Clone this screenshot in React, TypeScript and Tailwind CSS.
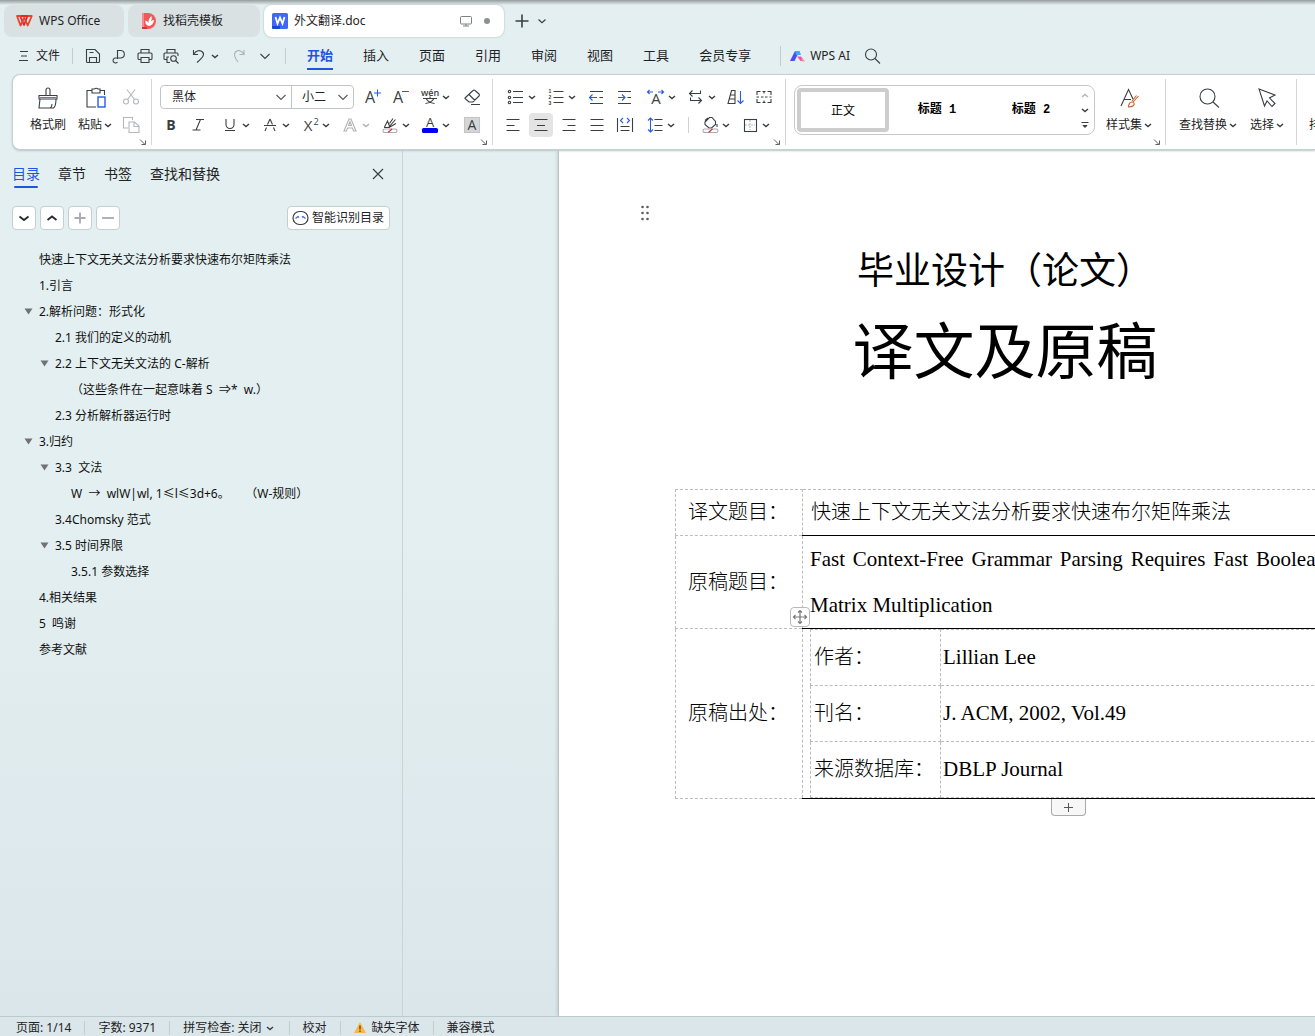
import React from "react";
import type { ReactNode } from "react";

const INK = "#3b3f42";
const BLUE = "#2a5ce0";

function Icon({ children, size = 20 }: { children: ReactNode; size?: number }) {
  return (
    <svg
      width={size}
      height={size}
      viewBox={`0 0 ${size} ${size}`}
      fill="none"
      stroke={INK}
      strokeWidth="1.1"
      aria-hidden="true"
      className="shrink-0"
    >
      {children}
    </svg>
  );
}

function Chevron({ color = "#3b3f42" }: { color?: string }) {
  return (
    <svg width="12" height="12" viewBox="0 0 12 12" fill="none" className="shrink-0">
      <path d="M3 5 6 7.500 9 5" stroke={color} strokeWidth="1.500" />
    </svg>
  );
}

function WideChevron({ color = "#55595c" }: { color?: string }) {
  return (
    <svg width="12" height="12" viewBox="0 0 12 12" fill="none" className="shrink-0">
      <path d="M1.500 4 6 8.500 10.500 4" stroke={color} strokeWidth="1.100" />
    </svg>
  );
}

function Tool({
  label,
  children,
  drop,
  dim,
  className = "",
}: {
  label: string;
  children: ReactNode;
  drop?: boolean;
  dim?: boolean;
  className?: string;
}) {
  return (
    <button type="button" aria-label={label} className={`flex h-6 shrink-0 items-center ${className}`}>
      <Icon>{children}</Icon>
      {drop && <Chevron color={dim ? "#b0b3b5" : INK} />}
    </button>
  );
}

function Glyph({
  x,
  y,
  size,
  color = INK,
  weight = 400,
  family = "'Open Sans','Noto Sans',sans-serif",
  children,
}: {
  x: number;
  y: number;
  size: number;
  color?: string;
  weight?: number;
  family?: string;
  children: string;
}) {
  return (
    <text x={x} y={y} fontSize={size} fill={color} stroke="none" fontWeight={weight} textAnchor="middle" fontFamily={family}>
      {children}
    </text>
  );
}

function Launcher() {
  return (
    <svg
      width="8"
      height="8"
      viewBox="0 0 8 8"
      fill="none"
      stroke="#5d6164"
      className="absolute right-1 bottom-[3px]"
      aria-hidden="true"
    >
      <path d="M1 1.500 6 6.500M6.500 2.500V6.500H2.500" />
    </svg>
  );
}

function VLine({ className }: { className: string }) {
  return <div className={`w-px shrink-0 bg-[#c3cdcf] ${className}`} />;
}

/* ---------- title bar ---------- */

function TitleTabs() {
  return (
    <div className="flex h-8 shrink-0 items-stretch gap-1 pl-1">
      <button type="button" className="flex w-[120px] items-center gap-1.5 rounded-lg bg-[#d9e1e3] pl-3 text-xs">
        <svg width="17" height="14" viewBox="0 0 17 14" fill="none" strokeWidth="1.800" strokeLinejoin="round">
          <path d="M5 2h6.500L8 11 4.500 3" stroke="#e5252a" />
          <path d="M5 2H1L4.500 11.500 8.300 3.500 11.700 11.500 15.800 2H12" stroke="#f0402c" />
        </svg>
        <span>WPS Office</span>
      </button>
      <button type="button" className="flex w-[132px] items-center gap-[7px] rounded-lg bg-[#d9e1e3] pl-3.5 text-xs">
        <svg width="14" height="16" viewBox="0 0 14 16">
          <path d="M0 0h6a8 8 0 0 1 0 16H0z" fill="#f05a5a" />
          <path d="M0 0h2v16H0z" fill="#f88" />
          <path d="M0 14h5v2H0z" fill="#c93a3a" />
          <path d="M7 13C3.500 12 3 9.500 3.500 7.500 5 8 6 9 6.500 10 6.300 7 7.500 4.500 9.500 3c.5 2 .3 3.500-.5 5 1-.8 2-1 3-1-.2 3-2 5.500-5 6z" fill="#fff" />
        </svg>
        <span>找稻壳模板</span>
      </button>
      <button
        type="button"
        className="flex w-[240px] items-center rounded-lg bg-white pr-3.5 pl-2 text-xs shadow-[0_0_2px_#9fb4b6]"
      >
        <svg width="16" height="16" viewBox="0 0 16 16" className="mr-1.5">
          <rect width="16" height="16" rx="1.500" fill="#4068f5" />
          <path d="M0 13h8v3H1.500A1.500 1.500 0 0 1 0 14.500z" fill="#1a48c8" />
          <path d="M3.500 4 5.500 10.500 8 4.500 10.500 10.500 12.500 4" stroke="#fff" strokeWidth="1.800" fill="none" />
        </svg>
        <span>外文翻译.doc</span>
        <svg width="12" height="12" viewBox="0 0 12 12" fill="none" stroke="#7b8083" className="ml-auto">
          <rect x=".5" y="1.500" width="11" height="7.500" rx="1" />
          <path d="M6 9v2M3 11h6" />
        </svg>
        <span className="ml-3 size-[6px] rounded-full bg-[#8b8f91]" />
      </button>
      <button type="button" aria-label="新建" className="ml-1 flex items-center">
        <Icon>
          <path d="M10 3.500v13M3.500 10h13" strokeWidth="1.600" />
        </Icon>
      </button>
      <button type="button" aria-label="标签列表" className="flex items-center">
        <svg width="12" height="12" viewBox="0 0 12 12" fill="none">
          <path d="M2.500 4.500 6 7.800 9.500 4.500" stroke={INK} strokeWidth="1.200" />
        </svg>
      </button>
    </div>
  );
}

/* ---------- menu bar ---------- */

const MENUS = ["开始", "插入", "页面", "引用", "审阅", "视图", "工具", "会员专享"];

function MenuBar() {
  return (
    <div className="flex h-[37px] shrink-0 items-center pl-[18px] whitespace-nowrap">
      <button type="button" className="flex items-center gap-1.5 text-xs">
        <svg width="12" height="12" viewBox="0 0 12 12" stroke={INK} strokeWidth="1.100">
          <path d="M2 1.500h8M3 6h6M1 10.500h9" />
        </svg>
        文件
      </button>
      <VLine className="ml-3 h-4" />
      <div className="ml-2.5 flex items-center gap-1.5">
        <Tool label="保存">
          <path d="M3.500 3.500h8.500l4.500 4.500v7.500a1 1 0 0 1-1 1h-11a1 1 0 0 1-1-1z" />
          <path d="M6.500 16.500v-5h7v5M6.500 6.500h4" />
        </Tool>
        <Tool label="分享">
          <path d="M8.500 13V4.500h3.500a4 3.800 0 0 1 0 7.500H6.500a2.500 2.500 0 1 0 2 4" />
        </Tool>
        <Tool label="打印">
          <path d="M6 7V3.500h8V7M6 13.500H4a1 1 0 0 1-1-1V8a1 1 0 0 1 1-1h12a1 1 0 0 1 1 1v4.500a1 1 0 0 1-1 1h-2M6 11.500h8v5H6z" />
        </Tool>
        <Tool label="打印预览">
          <path d="M6 7V3.500h8V7M5.500 13.500H4a1 1 0 0 1-1-1V8a1 1 0 0 1 1-1h12a1 1 0 0 1 1 1v2M8 11H6v5.500h3" />
          <circle cx="12.500" cy="12.500" r="2.800" />
          <path d="m14.500 14.500 3 3" />
        </Tool>
        <Tool label="撤销" drop className="ml-0.5">
          <path d="M4.500 4v4.500H9M4.500 8.500C7 4.500 11 3.500 13.500 6S14 11.500 8 16.500" />
        </Tool>
        <Tool label="恢复" className="ml-0.5">
          <path d="M15 4v4.500h-4.500M15 8.500C13 4.500 9 3.500 6.500 6S6 12 9 16" stroke="#a9b2b4" />
        </Tool>
      </div>
      <button type="button" aria-label="更多" className="ml-2.5">
        <WideChevron color={INK} />
      </button>
      <VLine className="ml-3.5 h-4" />
      <nav className="ml-[21px] flex gap-[30px] text-[13px]">
        {MENUS.map((m, i) => (
          <a
            key={m}
            href="#"
            className={
              i === 0
                ? "flex h-7 items-center border-b-2 border-[#1f55e0] pt-0.5 font-bold text-[#1f55e0]"
                : "flex h-7 items-center border-b-2 border-transparent pt-0.5"
            }
          >
            {m}
          </a>
        ))}
      </nav>
      <VLine className="ml-[29px] h-5" />
      <button type="button" className="ml-[9px] flex items-center gap-1 text-xs">
        <svg width="16" height="14" viewBox="0 0 16 14">
          <path d="M0 12 5 2h4.500L4.500 12z" fill="#4a4cf0" />
          <path d="M5 2h4.500l1.500 4H6z" fill="#42a5f8" />
          <path d="M7 7.500h4L14.500 12h-4z" fill="#ee4fc0" />
          <path d="M11.500 9 15 12.500h-3z" fill="#ffa08a" />
        </svg>
        WPS AI
      </button>
      <button type="button" aria-label="搜索" className="ml-3">
        <Icon>
          <circle cx="9" cy="8.500" r="5.500" />
          <path d="m13 12.500 5 5" />
        </Icon>
      </button>
    </div>
  );
}

/* ---------- ribbon ---------- */

function ClipboardGroup() {
  return (
    <section className="relative flex w-[138px] shrink-0 pt-3 pl-4 text-xs">
      <button type="button" className="flex w-[38px] flex-col items-center gap-2">
        <Icon size={22}>
          <path d="M2 8.500h18v3.500H2zM3 12l-1 9h14.500c1.500-1 2.500-5 2.500-9M13.500 21c1-1 1.500-2.500 1.500-4M9 8.500V3a2 2 0 0 1 4 0v5.500" />
          <path d="M2.500 10.500h17" stroke="#d0602c" />
        </Icon>
        格式刷
      </button>
      <button type="button" className="ml-[11px] flex w-9 flex-col items-center gap-2">
        <Icon size={22}>
          <path d="M7 3.500H2v16.500h9M15 3.500h4.500V8M7 2h2.500a2 1.500 0 0 1 3.500 0h2v4H7z" />
          <rect x="13" y="10" width="7" height="10" stroke={BLUE} strokeWidth="1.400" />
        </Icon>
        <span className="flex items-center">
          粘贴
          <Chevron />
        </span>
      </button>
      <div className="-mt-0.5 ml-[7px] flex flex-col gap-1">
        <Tool label="剪切">
          <g stroke="#b4b7b9">
            <circle cx="5" cy="14.500" r="2.500" />
            <circle cx="15" cy="14.500" r="2.500" />
            <path d="m6.500 12.500 7.500-10M13.500 12.500 6 2.500" />
          </g>
        </Tool>
        <Tool label="复制">
          <g stroke="#b4b7b9">
            <path d="M7 13H2.500V2.500h9V5" />
            <path d="M8 7h5.500L18 11v6.500H8zM13 7v4.500h5" />
          </g>
        </Tool>
      </div>
      <Launcher />
    </section>
  );
}

function Rule() {
  return <div className="my-1 w-px shrink-0 bg-[#d4d7d8]" />;
}

function FontGroup() {
  return (
    <section className="relative flex w-[340px] shrink-0 flex-col gap-1 pt-2.5 pl-2">
      <div className="flex h-6 items-center gap-2">
        <div className="flex h-6 w-[194px] items-center rounded border border-[#c2c5c7] text-xs">
          <label className="relative flex h-full w-[131px] items-center border-r border-[#c2c5c7]">
            <select aria-label="字体" className="h-full w-full appearance-none bg-transparent pl-[11px] outline-none">
              <option>黑体</option>
            </select>
            <span className="pointer-events-none absolute right-1">
              <WideChevron />
            </span>
          </label>
          <label className="relative flex h-full flex-1 items-center">
            <select aria-label="字号" className="h-full w-full appearance-none bg-transparent pl-2.5 outline-none">
              <option>小二</option>
            </select>
            <span className="pointer-events-none absolute right-1">
              <WideChevron />
            </span>
          </label>
        </div>
        <Tool label="增大字号">
          <Glyph x={8} y={16} size={16}>A</Glyph>
          <path d="M15.500 2.500v7M12 6h7" stroke={BLUE} />
        </Tool>
        <Tool label="减小字号">
          <Glyph x={8} y={16} size={16}>A</Glyph>
          <path d="M12 4.500h7" stroke={BLUE} />
        </Tool>
        <Tool label="拼音指南" drop className="ml-0.5">
          <Glyph x={10} y={9} size={9} weight={600}>wén</Glyph>
          <path d="M3 11.500h14M10 9.500v2M6 11.500c1.500 2.500 5 4.500 8.500 5M14 11.500c-1.500 2.500-5 4.500-8.500 5" />
        </Tool>
        <Tool label="清除格式" className="ml-0.5">
          <path d="m3 11 8-7.500q1-1 2 0L17 7q1 1 0 2l-6 6H7l-4-3.500zM7 7.500l6 6M9 17.500h9" />
        </Tool>
      </div>
      <div className="flex h-6 items-center gap-2">
        <Tool label="加粗">
          <Glyph x={11} y={15} size={14} weight={700}>B</Glyph>
        </Tool>
        <Tool label="倾斜">
          <path d="M8 4.500h8M4.500 15h8M12.500 4.500l-4.500 10.500" />
        </Tool>
        <Tool label="下划线" drop className="ml-1">
          <path d="M6 4v5.500a4 4 0 0 0 8 0V4M5 15.500h10" />
        </Tool>
        <Tool label="删除线" drop>
          <path d="M10 4 7.500 9.500M10 4l2.500 5.500M4 10.500h12M6.500 12.500 5 16M13.500 12.500 15 16" />
        </Tool>
        <Tool label="上标" drop>
          <Glyph x={8} y={16} size={15}>X</Glyph>
          <Glyph x={16} y={10} size={9}>2</Glyph>
        </Tool>
        <Tool label="文字效果" drop dim>
          <path d="M4 16 9 4h2l5 12h-2.500l-1-3h-5l-1 3zM8.500 10.500h3L10 6.500z" stroke="#b0b3b5" />
        </Tool>
        <Tool label="突出显示" drop>
          <path d="M4 12.500h4.500l7-8M4.500 12l3-6 2 5M9 12.500l7-4M13 3.500l-3.500 5" />
          <rect x="3" y="14" width="14" height="3.500" rx="1.700" stroke="#a9acae" />
          <path d="m8 17.500 4-3.500" stroke="#e0303a" />
        </Tool>
        <Tool label="字体颜色" drop>
          <Glyph x={10} y={12} size={13}>A</Glyph>
          <rect x="2" y="13" width="16" height="5" rx="1.500" fill="#0000f5" stroke="none" />
        </Tool>
        <Tool label="字符底纹" className="ml-0.5">
          <rect x="2.500" y="2.500" width="15" height="15" fill="#d4d6d7" stroke="#c3c6c8" />
          <Glyph x={10} y={15} size={14}>A</Glyph>
        </Tool>
      </div>
      <Launcher />
    </section>
  );
}

const DIGIT_FONT = "'Liberation Sans',sans-serif";

function ParagraphGroup() {
  return (
    <section className="relative flex w-[292px] shrink-0 flex-col gap-1 pt-2.5 pl-2.5">
      <div className="flex h-6 items-center gap-2 pl-[3px]">
        <Tool label="项目符号" drop>
          <path d="M7 4.500h10M7 10.500h10M7 15.500h10" />
          <circle cx="3.500" cy="4.500" r="1.200" />
          <circle cx="3.500" cy="10.500" r="1.200" />
          <circle cx="3.500" cy="15.500" r="1.200" />
        </Tool>
        <Tool label="编号" drop>
          <path d="M7.500 4.500h10M7.500 10.500h10M7.500 15.500h10" />
          <Glyph x={4} y={6} size={5} weight={700} family={DIGIT_FONT}>1</Glyph>
          <Glyph x={4} y={12} size={5} weight={700} family={DIGIT_FONT}>2</Glyph>
          <Glyph x={4} y={18} size={5} weight={700} family={DIGIT_FONT}>3</Glyph>
        </Tool>
        <Tool label="减少缩进">
          <path d="M4 4.500h13M4 16.500h13M13.500 10.500h3.500" />
          <path d="M3.500 10.500H11M6.500 7.500l-3 3 3 3" stroke={BLUE} />
        </Tool>
        <Tool label="增加缩进">
          <path d="M4 4.500h13M4 16.500h13M13.500 10.500h3.500" />
          <path d="M4 10.500h7M8 7.500l3 3-3 3" stroke={BLUE} />
        </Tool>
        <Tool label="字符缩放" drop className="ml-1">
          <Glyph x={10} y={17} size={15}>A</Glyph>
          <path d="M1.500 5H7M3.500 3l-2 2 2 2M12 5h5.500M15.500 3l2 2-2 2" stroke={BLUE} />
        </Tool>
        <Tool label="换行" drop>
          <path d="M14.500 3.500v3h-11M6.500 3.500l-3 3 3 3M4.500 10.500v3h10.500M12.500 10.500l3 3-3 3" />
        </Tool>
        <Tool label="排序">
          <path d="M5.500 3.500H9v13H2zM4.500 8H9M3.500 12H9" />
          <path d="M14.500 4v12.500M11.500 13.500l3 3 3-3" stroke={BLUE} />
        </Tool>
        <Tool label="段落布局">
          <path d="M3 8V4.500h3.500M8.500 4.500h3M13.500 4.500H17V8M3 12v3.500h3.500M8.500 15.500h3M13.500 15.500H17V12M2.500 10H5M7 10h2.500M11 10h2.500M15.500 10h2M10 4.500v2M10 13.500v2" />
        </Tool>
      </div>
      <div className="flex h-6 items-center gap-2">
        <Tool label="左对齐">
          <path d="M3.500 4.500h13M3.500 10.500h8M3.500 15.500h13" />
        </Tool>
        <button
          type="button"
          aria-label="居中对齐"
          aria-pressed="true"
          className="-mx-0.5 flex size-6 shrink-0 items-center justify-center rounded bg-[#e4e4e4]"
        >
          <Icon>
            <path d="M3.500 4.500h13M6 10.500h8M3.500 15.500h13" />
          </Icon>
        </button>
        <Tool label="右对齐">
          <path d="M3.500 4.500h13M8.500 10.500h8M3.500 15.500h13" />
        </Tool>
        <Tool label="两端对齐">
          <path d="M3.500 4.500h13M3.500 10.500h13M3.500 15.500h13" />
        </Tool>
        <Tool label="分散对齐">
          <path d="M2.500 3v14M17.500 3v14M5.500 11.500h9M5.500 15.500h9" />
          <path d="m8 3-2.500 2.500L8 8M12 3l2.500 2.500L12 8" stroke={BLUE} />
        </Tool>
        <Tool label="行距" drop className="ml-0.5">
          <path d="M9.500 4.500h8M9.500 10.500h8M9.500 15.500h8" />
          <path d="M5.500 3v14M3 5.500 5.500 3 8 5.500M3 14.500 5.500 17 8 14.500" stroke={BLUE} />
        </Tool>
        <div className="mx-[3px] h-4 w-px bg-[#d0d3d4]" />
        <Tool label="底纹颜色" drop>
          <path d="m5 7 4.500-4.500h2.500l3.500 4v3L11.500 13H9L5 9.500zM5 5.500 8 3M17 9v3" />
          <rect x="3" y="14" width="15" height="3.500" rx="1.700" stroke="#a9acae" />
          <path d="m8.500 17.500 4-3.500" stroke="#e0303a" />
        </Tool>
        <Tool label="边框" drop>
          <path d="M10 5v10M5 10h10" stroke="#b4b7b9" strokeDasharray="2 1" />
          <rect x="4.500" y="4.500" width="12" height="12" />
        </Tool>
      </div>
      <Launcher />
    </section>
  );
}

function StylesGroup() {
  return (
    <section className="relative flex w-[379px] shrink-0 pt-2.5 pl-2">
      <div className="flex h-[50px] w-[301px] rounded-lg border border-[#c6c9ca] p-0.5 text-black">
        <button
          type="button"
          className="w-[92px] rounded border-4 border-[#cdcdcd] font-['Noto_Sans_CJK_SC',sans-serif] text-xs"
        >
          正文
        </button>
        <button
          type="button"
          className="w-[96px] font-['Liberation_Mono','Noto_Sans_CJK_SC',sans-serif] text-xs font-bold"
        >
          标题 1
        </button>
        <button
          type="button"
          className="w-[92px] font-['Liberation_Mono','Noto_Sans_CJK_SC',sans-serif] text-xs font-bold"
        >
          标题 2
        </button>
        <div className="-mr-px flex flex-1 flex-col items-center justify-between py-0.5">
          <button type="button" aria-label="上一行" className="rotate-180">
            <Chevron color="#b4b7b9" />
          </button>
          <button type="button" aria-label="下一行">
            <Chevron />
          </button>
          <button type="button" aria-label="更多样式">
            <svg width="12" height="12" viewBox="0 0 12 12" fill="none" stroke={INK}>
              <path d="M2.500 4.500h7M4 7.500h4L6 9.500z" fill={INK} />
            </svg>
          </button>
        </div>
      </div>
      <button type="button" className="ml-2 flex w-[54px] flex-col items-center gap-2 pt-0.5 text-xs">
        <Icon size={22}>
          <path d="M2 19 9.500 2.500 14 12M5.500 12.500H12" />
          <g stroke="#d0602c">
            <path d="M19.500 9 14 15M17.500 8.500 13 14M9.500 20c0-3 1.500-5 3.500-5s3 2 1.500 3.500-3 1.500-5 1.500z" />
          </g>
        </Icon>
        <span className="flex items-center whitespace-nowrap">
          样式集
          <Chevron />
        </span>
      </button>
      <Launcher />
    </section>
  );
}

function EditGroup() {
  return (
    <section className="flex w-[130px] shrink-0 gap-[9px] pt-3 pl-3 text-xs">
      <button type="button" className="flex w-[62px] flex-col items-center gap-2 whitespace-nowrap">
        <Icon size={22}>
          <circle cx="9.500" cy="9.500" r="7.500" />
          <path d="m15 15 6 5.500" />
        </Icon>
        <span className="flex items-center">
          查找替换
          <Chevron />
        </span>
      </button>
      <button type="button" className="flex w-[38px] flex-col items-center gap-2 whitespace-nowrap">
        <Icon size={22}>
          <path d="m2 2 16 6-5.500 3 5.500 5.500-3 3-5-5.500-2.500 5z" />
        </Icon>
        <span className="flex items-center">
          选择
          <Chevron />
        </span>
      </button>
    </section>
  );
}

function Ribbon() {
  return (
    <div className="relative z-10 ml-3 flex h-[76px] shrink-0 overflow-hidden rounded-l-lg border border-r-0 border-[#c4d1d2] bg-white shadow-[0_1px_2px_#b9c6c8]">
      <ClipboardGroup />
      <Rule />
      <FontGroup />
      <Rule />
      <ParagraphGroup />
      <Rule />
      <StylesGroup />
      <Rule />
      <EditGroup />
      <Rule />
      <button type="button" className="ml-3 flex shrink-0 flex-col pt-[42px] text-xs">
        排列
      </button>
    </div>
  );
}

/* ---------- outline pane ---------- */

type Entry = { text: string; level: 0 | 1 | 2; open?: boolean };

const OUTLINE: Entry[] = [
  { text: "快速上下文无关文法分析要求快速布尔矩阵乘法", level: 0 },
  { text: "1.引言", level: 0 },
  { text: "2.解析问题：形式化", level: 0, open: true },
  { text: "2.1 我们的定义的动机", level: 1 },
  { text: "2.2 上下文无关文法的 C-解析", level: 1, open: true },
  { text: "（这些条件在一起意味着 S  ⇒*  w.）", level: 2 },
  { text: "2.3 分析解析器运行时", level: 1 },
  { text: "3.归约", level: 0, open: true },
  { text: "3.3  文法", level: 1, open: true },
  { text: "W  →  wlW|wl, 1≤l≤3d+6。     （W-规则）", level: 2 },
  { text: "3.4Chomsky 范式", level: 1 },
  { text: "3.5 时间界限", level: 1, open: true },
  { text: "3.5.1 参数选择", level: 2 },
  { text: "4.相关结果", level: 0 },
  { text: "5  鸣谢", level: 0 },
  { text: "参考文献", level: 0 },
];

const INDENT = ["pl-6", "pl-10", "pl-14"];

function SquareButton({ label, color, d }: { label: string; color: string; d: string }) {
  return (
    <button
      type="button"
      aria-label={label}
      className="flex size-6 items-center justify-center rounded border border-[#c4cfd1] bg-white"
    >
      <svg width="14" height="14" viewBox="0 0 14 14" fill="none" stroke={color} strokeWidth="1.800">
        <path d={d} />
      </svg>
    </button>
  );
}

function OutlinePane() {
  return (
    <aside className="w-[403px] shrink-0 border-r border-[#cdd2d3]">
      <div className="flex h-12 items-center gap-[18px] pr-[18px] pl-3 text-sm">
        <a href="#" className="relative text-[#1f55e0]">
          目录
          <span className="absolute inset-x-0.5 -bottom-1 h-0.5 rounded bg-[#1f55e0]" />
        </a>
        <a href="#">章节</a>
        <a href="#">书签</a>
        <a href="#">查找和替换</a>
        <button type="button" aria-label="关闭" className="ml-auto">
          <svg width="12" height="12" viewBox="0 0 12 12" stroke={INK} strokeWidth="1.200">
            <path d="m1 1 10 10M11 1 1 11" />
          </svg>
        </button>
      </div>
      <div className="mt-2 flex gap-1 pr-3 pl-3">
        <SquareButton label="展开" color="#25282a" d="M2.500 5.500 7 9l4.500-3.500" />
        <SquareButton label="折叠" color="#25282a" d="M2.500 9 7 5.500 11.500 9" />
        <SquareButton label="增加级别" color="#a8abad" d="M7 1.500v11M1.500 7h11" />
        <SquareButton label="减少级别" color="#a8abad" d="M1 7h12" />
        <button
          type="button"
          className="ml-auto flex h-6 items-center gap-[3px] rounded border border-[#c4cfd1] bg-white px-1 pr-[5px] text-xs"
        >
          <svg width="17" height="16" viewBox="0 0 17 16" fill="none">
            <rect x="1" y="1.500" width="15" height="13" rx="6.500" stroke={INK} strokeWidth="1.200" />
            <path d="M3.500 8.500 6 6.500l1 1M10 7.500l1-1 2.500 2" stroke="#4a63e8" strokeWidth="1.300" />
          </svg>
          智能识别目录
        </button>
      </div>
      <ul className="mt-[17px] text-xs text-[#111]">
        {OUTLINE.map((e) => (
          <li key={e.text} className={`flex h-[26px] items-center ${INDENT[e.level]}`}>
            <span className="w-[15px] shrink-0">
              {e.open && (
                <svg width="9" height="8" viewBox="0 0 9 8">
                  <path d="M.5.5h8L4.500 6.500z" fill="#6f7375" />
                </svg>
              )}
            </span>
            <span className="whitespace-pre">{e.text}</span>
          </li>
        ))}
      </ul>
    </aside>
  );
}

/* ---------- document ---------- */

const SOURCE = [
  ["作者：", "Lillian Lee"],
  ["刊名：", "J. ACM, 2002, Vol.49"],
  ["来源数据库：", "DBLP Journal"],
];

function Paper() {
  return (
    <article className="relative w-[893px] shrink-0 border-l border-[#bcc6c7] bg-white px-[116px] pt-[92px] text-black shadow-[0_0_4px_#aebcbe]">
      <svg width="10" height="16" viewBox="0 0 10 16" fill="#5b5f61" className="absolute top-[55px] left-[81px]">
        {[2, 8, 14].map((y) => (
          <React.Fragment key={y}>
            <circle cx="2.500" cy={y} r="1.300" />
            <circle cx="7.500" cy={y} r="1.300" />
          </React.Fragment>
        ))}
      </svg>
      <h2 className="text-center font-['Liberation_Serif','Noto_Sans_CJK_SC',serif] text-[37px] leading-[60px]">
        毕业设计（论文）
      </h2>
      <h1 className="mt-0.5 text-center font-['Noto_Sans_CJK_SC',sans-serif] text-[61px] leading-[88px] font-normal">
        译文及原稿
      </h1>
      <div className="relative mt-[97px]">
        <table className="w-full table-fixed border-collapse font-['Liberation_Serif','Noto_Sans_CJK_SC',serif] text-xl leading-[45px] font-light">
          <colgroup>
            <col className="w-[127px]" />
            <col />
          </colgroup>
          <tbody>
            <tr>
              <th className="border border-dashed border-[#bcbcbc] p-0 pl-3 text-left font-light">译文题目：</th>
              <td className="border border-dashed border-[#bcbcbc] border-b-black p-0 pl-2 [border-bottom-style:solid]">
                快速上下文无关文法分析要求快速布尔矩阵乘法
              </td>
            </tr>
            <tr>
              <th className="border border-dashed border-[#bcbcbc] p-0 pl-3 text-left font-light">原稿题目：</th>
              <td className="border border-dashed border-[#bcbcbc] border-b-black p-0 pr-2 pl-[7px] text-justify text-[21px] leading-[46px] [border-bottom-style:solid]">
                Fast Context-Free Grammar Parsing Requires Fast Boolean Matrix Multiplication
              </td>
            </tr>
            <tr>
              <th className="border border-dashed border-[#bcbcbc] p-0 pl-3 text-left font-light">原稿出处：</th>
              <td className="border border-dashed border-[#bcbcbc] border-b-black p-0 pl-[7px] [border-bottom-style:solid]">
                <table className="w-full table-fixed border-collapse leading-[55px]">
                  <colgroup>
                    <col className="w-[130px]" />
                    <col />
                  </colgroup>
                  <tbody>
                    {SOURCE.map(([name, value]) => (
                      <tr key={name}>
                        <th className="border border-dashed border-[#bcbcbc] p-0 pl-[3px] text-left font-light whitespace-nowrap">
                          {name}
                        </th>
                        <td className="border border-dashed border-[#bcbcbc] p-0 pl-0.5 text-[21px]">{value}</td>
                      </tr>
                    ))}
                  </tbody>
                </table>
              </td>
            </tr>
          </tbody>
        </table>
        <button
          type="button"
          aria-label="移动表格"
          className="absolute top-[118px] left-[115px] flex size-5 items-center justify-center rounded-sm border border-[#b9b9b9] bg-white"
        >
          <svg width="16" height="16" viewBox="0 0 16 16" fill="none" stroke="#777" strokeWidth="1.200">
            <path d="M8 1.500v13M1.500 8h13M6 3.500l2-2 2 2M6 12.500l2 2 2-2M3.500 6l-2 2 2 2M12.500 6l2 2-2 2" />
          </svg>
        </button>
        <button
          type="button"
          aria-label="添加行"
          className="absolute top-full left-[376px] flex h-[17px] w-[35px] items-center justify-center rounded-b border border-t-0 border-[#a9a9a9] bg-[#f7f7f7]"
        >
          <svg width="9" height="9" viewBox="0 0 9 9" stroke="#555">
            <path d="M4.500 0v9M0 4.500h9" />
          </svg>
        </button>
      </div>
    </article>
  );
}

/* ---------- status bar ---------- */

function StatusBar() {
  return (
    <footer className="flex h-5 shrink-0 items-center gap-[13px] border-t border-[#bccacd] bg-[#dae6ea] pt-0.5 pl-4 text-xs whitespace-nowrap">
      <span>页面: 1/14</span>
      <VLine className="h-3.5" />
      <span>字数: 9371</span>
      <VLine className="h-3.5" />
      <button type="button" className="flex items-center gap-0.5">
        拼写检查: 关闭
        <Chevron />
      </button>
      <VLine className="h-3.5" />
      <button type="button">校对</button>
      <VLine className="h-3.5" />
      <button type="button" className="flex items-center gap-1.5">
        <svg width="12" height="11" viewBox="0 0 12 11">
          <path d="M6 0 12 11H0z" fill="#f6b74a" />
          <path d="M6 3.500v4M6 8.500V10" stroke="#6b4a10" strokeWidth="1.400" />
        </svg>
        缺失字体
      </button>
      <VLine className="h-3.5" />
      <span>兼容模式</span>
    </footer>
  );
}

export default function App() {
  return (
    <div className="flex h-screen flex-col overflow-hidden bg-linear-to-b from-[#e3eff0] via-[#e3eff0] to-[#dae6ea] font-['Noto_Sans','Noto_Sans_CJK_SC',sans-serif] text-[#1f2325]">
      <div className="h-[5px] shrink-0 bg-linear-to-b from-[#979d9f] to-[#e3eff0]" />
      <TitleTabs />
      <MenuBar />
      <Ribbon />
      <div className="flex min-h-0 flex-1">
        <OutlinePane />
        <main className="flex min-w-0 flex-1 overflow-hidden pl-[155px]">
          <Paper />
        </main>
      </div>
      <StatusBar />
    </div>
  );
}
